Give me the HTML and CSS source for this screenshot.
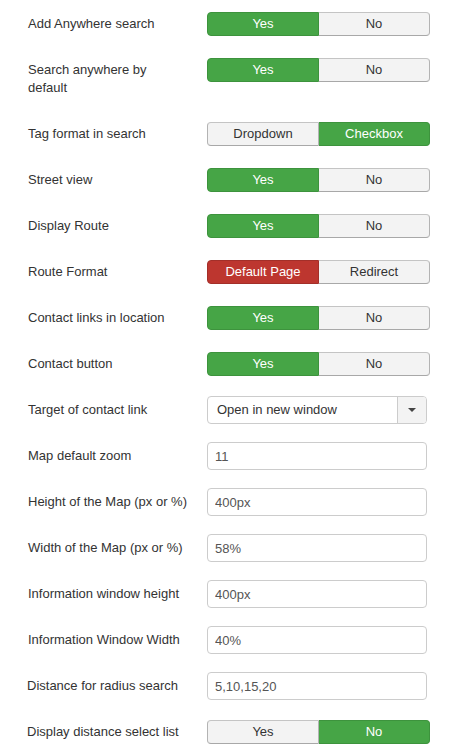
FILE: index.html
```html
<!DOCTYPE html>
<html>
<head>
<meta charset="utf-8">
<link rel="stylesheet" href="styles.css">
</head>
<body>
<form class="form">
  <div class="row">
    <label class="label">Add Anywhere search</label>
    <div class="toggle"><span class="btn on-green">Yes</span><span class="btn off">No</span></div>
  </div>
  <div class="row">
    <label class="label">Search anywhere by default</label>
    <div class="toggle"><span class="btn on-green">Yes</span><span class="btn off">No</span></div>
  </div>
  <div class="row">
    <label class="label">Tag format in search</label>
    <div class="toggle"><span class="btn off">Dropdown</span><span class="btn on-green">Checkbox</span></div>
  </div>
  <div class="row">
    <label class="label">Street view</label>
    <div class="toggle"><span class="btn on-green">Yes</span><span class="btn off">No</span></div>
  </div>
  <div class="row">
    <label class="label">Display Route</label>
    <div class="toggle"><span class="btn on-green">Yes</span><span class="btn off">No</span></div>
  </div>
  <div class="row">
    <label class="label">Route Format</label>
    <div class="toggle"><span class="btn on-red">Default Page</span><span class="btn off">Redirect</span></div>
  </div>
  <div class="row">
    <label class="label">Contact links in location</label>
    <div class="toggle"><span class="btn on-green">Yes</span><span class="btn off">No</span></div>
  </div>
  <div class="row">
    <label class="label">Contact button</label>
    <div class="toggle"><span class="btn on-green">Yes</span><span class="btn off">No</span></div>
  </div>
  <div class="row">
    <label class="label">Target of contact link</label>
    <div class="select"><span class="select-text">Open in new window</span><span class="select-arrow"><span class="caret"></span></span></div>
  </div>
  <div class="row">
    <label class="label">Map default zoom</label>
    <input class="input" type="text" value="11">
  </div>
  <div class="row">
    <label class="label">Height of the Map (px or %)</label>
    <input class="input" type="text" value="400px">
  </div>
  <div class="row">
    <label class="label">Width of the Map (px or %)</label>
    <input class="input" type="text" value="58%">
  </div>
  <div class="row">
    <label class="label">Information window height</label>
    <input class="input" type="text" value="400px">
  </div>
  <div class="row">
    <label class="label">Information Window Width</label>
    <input class="input" type="text" value="40%">
  </div>
  <div class="row">
    <label class="label label-shift">Distance for radius search</label>
    <input class="input" type="text" value="5,10,15,20">
  </div>
  <div class="row">
    <label class="label label-shift">Display distance select list</label>
    <div class="toggle"><span class="btn off">Yes</span><span class="btn on-green">No</span></div>
  </div>
</form>
</body>
</html>
```
FILE: styles.css
```css
html, body {
  margin: 0;
  padding: 0;
  background: #ffffff;
}

body {
  font-family: "Liberation Sans", Arial, sans-serif;
  font-size: 13px;
  color: #333333;
}

.form {
  padding: 10px 0 0 28px;
}

.row {
  display: grid;
  grid-template-columns: 160px auto;
  column-gap: 19px;
  align-items: start;
  justify-items: start;
  margin-bottom: 18px;
  min-height: 28px;
}

.label {
  padding: 5px 0;
  line-height: 18px;
  color: #333333;
}

.label-shift {
  margin-left: -1px;
}

.toggle {
  display: flex;
  width: 223px;
  height: 24px;
  margin-top: 2px;
}

.btn {
  flex: 1 1 0;
  box-sizing: border-box;
  height: 24px;
  line-height: 22px;
  text-align: center;
  border: 1px solid #b3b3b3;
  font-size: 13px;
}

.btn:first-child {
  border-radius: 4px 0 0 4px;
}

.btn:last-child {
  border-radius: 0 4px 4px 0;
  border-left: none;
}

.off {
  background: #f3f3f3;
  color: #333333;
  border-color: #c4c4c4 #b3b3b3 #a8a8a8 #b3b3b3;
}

.on-green {
  background: #46a546;
  color: #ffffff;
  border-color: #3d933d;
}

.on-red {
  background: #bd362f;
  color: #ffffff;
  border-color: #a32f29;
}

.select {
  display: flex;
  box-sizing: border-box;
  width: 220px;
  height: 28px;
  border: 1px solid #cccccc;
  border-radius: 4px;
  background: #ffffff;
}

.select-text {
  flex: 1;
  padding-left: 9px;
  line-height: 26px;
  color: #333333;
}

.select-arrow {
  width: 28px;
  border-left: 1px solid #cccccc;
  background: #f3f3f3;
  border-radius: 0 3px 3px 0;
  display: flex;
  align-items: center;
  justify-content: center;
}

.caret {
  width: 0;
  height: 0;
  border-left: 4px solid transparent;
  border-right: 4px solid transparent;
  border-top: 4px solid #444444;
}

.input {
  box-sizing: border-box;
  width: 220px;
  height: 28px;
  margin: 0;
  padding: 0 7px;
  border: 1px solid #cccccc;
  border-radius: 4px;
  font-family: "Liberation Sans", Arial, sans-serif;
  font-size: 13px;
  color: #555555;
  background: #ffffff;
  outline: none;
}
```
